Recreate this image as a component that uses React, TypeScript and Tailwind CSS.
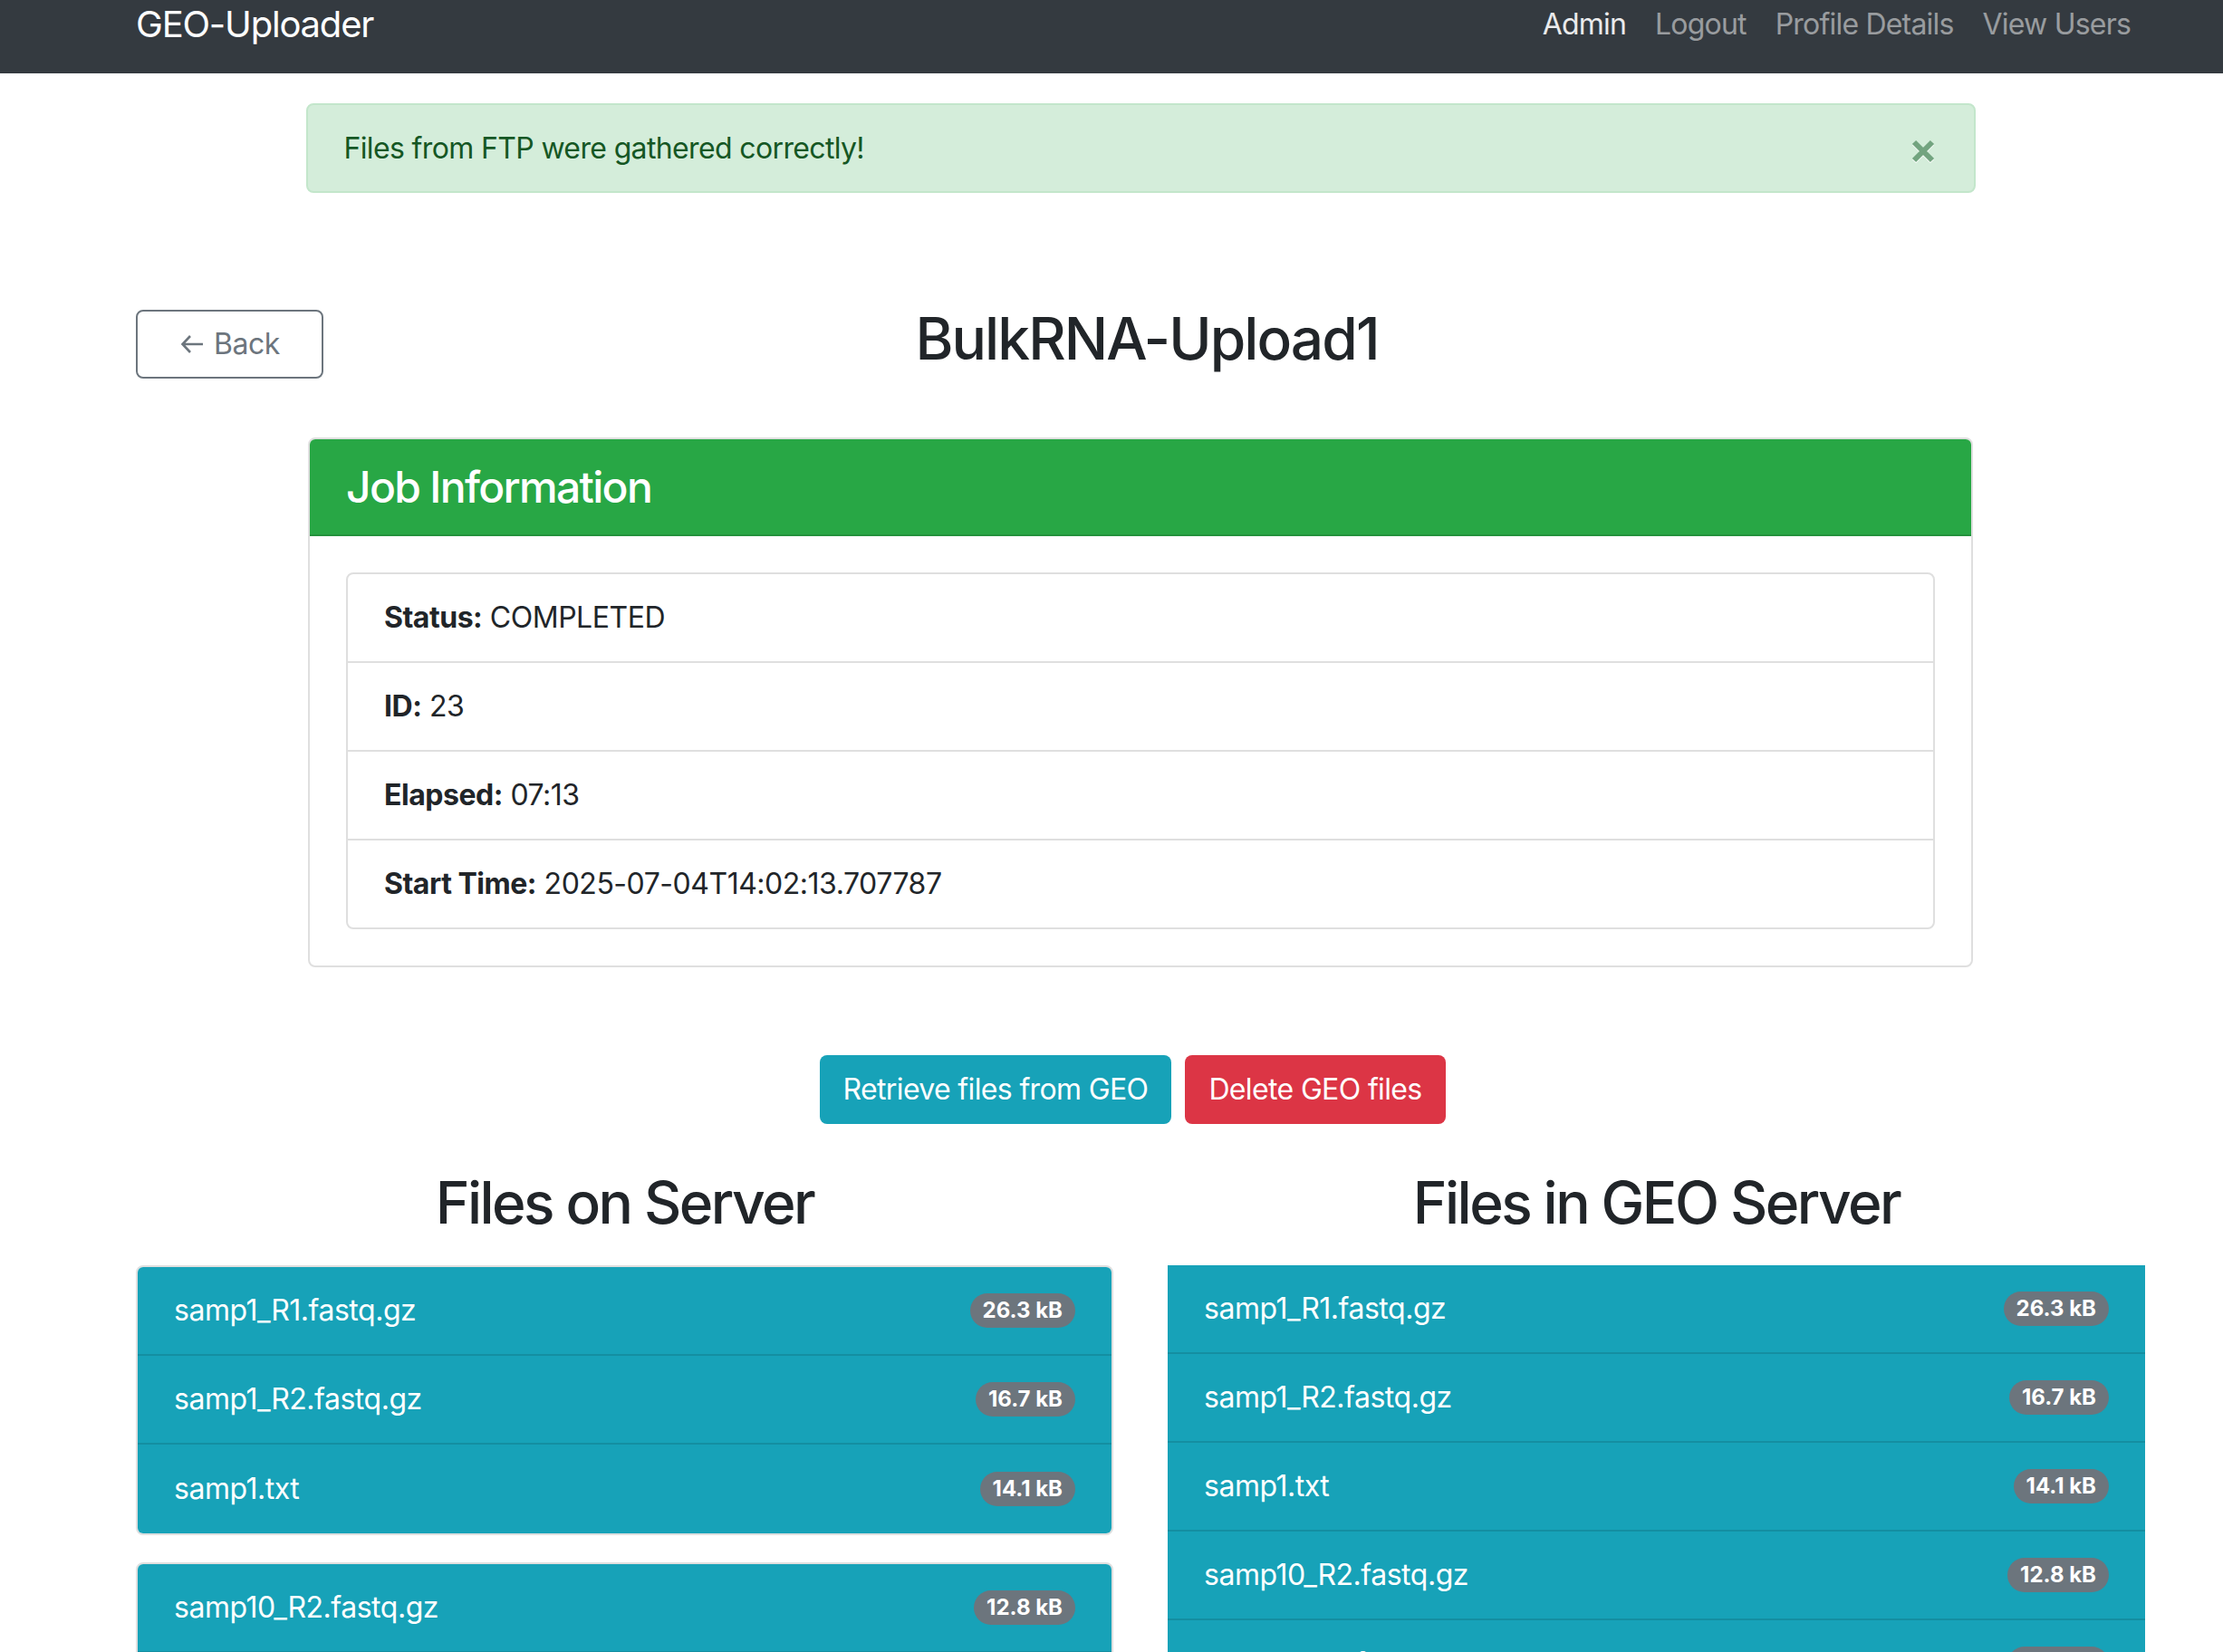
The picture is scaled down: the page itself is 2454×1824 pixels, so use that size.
import React from 'react';

type FileRow = { name: string; size: string };

const serverGroups: FileRow[][] = [
    [
        { name: 'samp1_R1.fastq.gz', size: '26.3 kB' },
        { name: 'samp1_R2.fastq.gz', size: '16.7 kB' },
        { name: 'samp1.txt', size: '14.1 kB' },
    ],
    [
        { name: 'samp10_R2.fastq.gz', size: '12.8 kB' },
        { name: 'samp10_R1.fastq.gz', size: '13.2 kB' },
        { name: 'samp10.txt', size: '14.1 kB' },
    ],
];

const geoFiles: FileRow[] = [
    { name: 'samp1_R1.fastq.gz', size: '26.3 kB' },
    { name: 'samp1_R2.fastq.gz', size: '16.7 kB' },
    { name: 'samp1.txt', size: '14.1 kB' },
    { name: 'samp10_R2.fastq.gz', size: '12.8 kB' },
    { name: 'samp10_R1.fastq.gz', size: '13.2 kB' },
    { name: 'samp10.txt', size: '14.1 kB' },
];

const jobInfo = [
    { label: 'Status:', value: 'COMPLETED' },
    { label: 'ID:', value: '23' },
    { label: 'Elapsed:', value: '07:13' },
    { label: 'Start Time:', value: '2025-07-04T14:02:13.707787' },
];

function SizeBadge({ size }: { size: string }) {
    return (
        <span className="flex h-[38px] items-center rounded-full bg-[#6c757d] px-[14px] text-[24px] font-bold leading-none tracking-normal text-white">
            {size}
        </span>
    );
}

function FileItem({ file, last }: { file: FileRow; last: boolean }) {
    return (
        <div
            className={
                'flex h-[98px] items-center justify-between bg-[#17a2b8] px-[40px] text-white ' +
                (last ? '' : 'border-b-2 border-[#148ea1]')
            }
        >
            <span>{file.name}</span>
            <SizeBadge size={file.size} />
        </div>
    );
}

export default function App() {
    return (
        <div className="min-h-screen w-full bg-white font-['Inter','Noto_Sans',sans-serif] text-[32px] leading-[1.5] tracking-[-0.015em] text-[#212529]">
            {/* Navbar */}
            <nav className="h-[81px] bg-[#343a40]">
                <div className="ml-[150px] flex w-[2218px] items-start justify-between">
                    <span className="text-[40px] leading-[54px] tracking-[-0.03em] text-white">GEO-Uploader</span>
                    <div className="flex leading-[54px] tracking-[-0.025em]">
                        <span className="px-[16px] text-white/90">Admin</span>
                        <span className="px-[16px] text-white/50">Logout</span>
                        <span className="px-[16px] text-white/50">Profile Details</span>
                        <span className="px-[16px] text-white/50">View Users</span>
                    </div>
                </div>
            </nav>

            <div className="ml-[150px] w-[2218px] pb-[80px]">
                {/* Alert */}
                <div className="mx-auto mt-[33px] flex h-[99px] w-[1843px] items-center justify-between rounded-[8px] border-2 border-[#c3e6cb] bg-[#d4edda] pl-[40px] pr-[43px] text-[#155724]">
                    <span className="tracking-[-0.02em]">Files from FTP were gathered correctly!</span>
                    <svg width="26" height="26" viewBox="0 0 26 26" className="mt-[6px]">
                        <path d="M3 3 L23 23 M23 3 L3 23" stroke="#fff" strokeWidth="6" transform="translate(0 1)" />
                        <path d="M3 3 L23 23 M23 3 L3 23" stroke="#72a47f" strokeWidth="6" />
                    </svg>
                </div>

                {/* Title row */}
                <div className="mt-[120px] grid h-[93px] grid-cols-[207px_1fr_207px] items-center">
                    <button className="flex h-[76px] w-[207px] items-center gap-[11px] rounded-[8px] border-2 border-[#6c757d] pl-[47px] text-[#6c757d]">
                        <svg width="26" height="22" viewBox="0 0 26 22" fill="none" stroke="currentColor" strokeWidth="2.6">
                            <path d="M25 11H2.5 M11 2 L2.5 11 L11 20" />
                        </svg>
                        <span>Back</span>
                    </button>
                    <h2 className="mb-[10px] pl-[14px] text-center text-[64px] font-medium leading-[1.2] tracking-[-0.03em]">
                        BulkRNA-Upload1
                    </h2>
                    <div />
                </div>

                {/* Job Information card */}
                <div className="mx-auto mt-[57px] w-[1838px] overflow-hidden rounded-[8px] border-2 border-[#dfdfdf]">
                    <div className="flex h-[107px] items-center border-b-2 border-[#23923c] bg-[#28a745] px-[40px]">
                        <h4 className="text-[48px] font-medium leading-[1.2] tracking-[-0.035em] text-white">Job Information</h4>
                    </div>
                    <div className="p-[40px]">
                        <div className="rounded-[8px] border-2 border-[#dfdfdf]">
                            {jobInfo.map((row, i) => (
                                <div
                                    key={row.label}
                                    className={
                                        'flex items-center px-[40px] ' +
                                        (i < jobInfo.length - 1 ? 'h-[98px] border-b-2 border-[#dfdfdf]' : 'h-[96px]')
                                    }
                                >
                                    <strong className="font-bold">{row.label}</strong>
                                    <span>&nbsp;{row.value}</span>
                                </div>
                            ))}
                        </div>
                    </div>
                </div>

                {/* Actions */}
                <div className="mt-[97px] flex justify-center gap-[15px] pr-[17px]">
                    <button className="h-[76px] w-[388px] rounded-[8px] bg-[#17a2b8] text-center tracking-[-0.02em] text-white">
                        Retrieve files from GEO
                    </button>
                    <button className="h-[76px] w-[288px] rounded-[8px] bg-[#dc3545] text-center tracking-[-0.02em] text-white">
                        Delete GEO files
                    </button>
                </div>

                {/* File columns */}
                <div className="mt-[49px] grid grid-cols-[1079px_1079px] gap-x-[60px]">
                    <div>
                        <h2 className="h-[77px] text-center text-[64px] font-medium leading-[1.2] tracking-[-0.04em]">Files on Server</h2>
                        <div className="mt-[30px] flex flex-col gap-[30px]">
                            {serverGroups.map((group, gi) => (
                                <div key={gi} className="overflow-hidden rounded-[8px] border-2 border-[#dfdfdf]">
                                    {group.map((file, i) => (
                                        <FileItem key={file.name} file={file} last={i === group.length - 1} />
                                    ))}
                                </div>
                            ))}
                        </div>
                    </div>
                    <div>
                        <h2 className="h-[77px] text-center text-[64px] font-medium leading-[1.2] tracking-[-0.04em]">Files in GEO Server</h2>
                        <div className="mt-[30px]">
                            {geoFiles.map((file) => (
                                <FileItem key={file.name} file={file} last={false} />
                            ))}
                        </div>
                    </div>
                </div>
            </div>
        </div>
    );
}
